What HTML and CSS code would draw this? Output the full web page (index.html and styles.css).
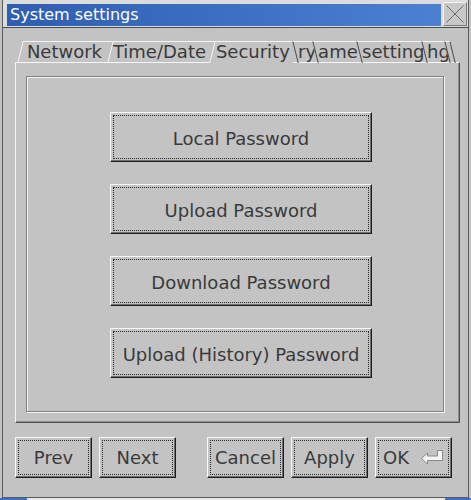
FILE: index.html
```html
<!DOCTYPE html>
<html>
<head>
<meta charset="utf-8">
<link rel="stylesheet" href="styles.css">
</head>
<body>
<div class="window">
  <div class="titlebar">
    <div class="title">System settings</div>
    <div class="close">
      <svg width="22" height="22" viewBox="0 0 22 22"><path d="M2.5 2.5 L19.5 19.5 M19.5 2.5 L2.5 19.5" stroke="#6a6a6a" stroke-width="1" fill="none"/></svg>
    </div>
  </div>
  <div class="content">
    <div class="tabs">
      <div class="tab tab-l w-net"><span>Network</span></div>
      <div class="tab tab-l w-time"><span>Time/Date</span></div>
      <div class="tab tab-l active w-sec"><span>Security</span></div>
      <div class="tab tab-r w-ry"><span>ry</span></div>
      <div class="tab tab-r w-ame"><span>ame</span></div>
      <div class="tab tab-r w-set"><span>setting</span></div>
      <div class="tab tab-r w-hg"><span>hg</span></div>
      <div class="tab tab-r tab-end"></div>
    </div>
    <div class="pane">
      <div class="group">
        <div class="btn big"><div class="focus">Local Password</div></div>
        <div class="btn big"><div class="focus">Upload Password</div></div>
        <div class="btn big"><div class="focus">Download Password</div></div>
        <div class="btn big"><div class="focus">Upload (History) Password</div></div>
      </div>
    </div>
    <div class="actions">
      <div class="btn small"><div class="focus">Prev</div></div>
      <div class="btn small"><div class="focus">Next</div></div>
      <div class="btn small push"><div class="focus">Cancel</div></div>
      <div class="btn small"><div class="focus">Apply</div></div>
      <div class="btn small"><div class="focus ok">OK
        <svg class="enter" width="23" height="15" viewBox="0 0 23 15"><path d="M0.5 8.5 L6.5 3 L6.5 6 L16.5 6 L16.5 0.5 L21.5 0.5 L21.5 10.5 L6.5 10.5 L6.5 14 Z" fill="#f4f4f4" stroke="#8a8a8a" stroke-width="1" stroke-linejoin="miter"/></svg>
      </div></div>
    </div>
  </div>
</div>
<div class="taskbar"><span class="tb tb-left"></span><span class="tb tb-right"></span></div>
</body>
</html>
```

FILE: styles.css
```css
html, body {
  margin: 0;
  padding: 0;
}
body {
  width: 471px;
  height: 500px;
  overflow: hidden;
  background: #c3c3c3;
  font-family: "DejaVu Sans", Verdana, sans-serif;
  color: #3a3a3a;
}
.window {
  margin: 0 2px;
  height: 498px;
  box-sizing: border-box;
  border: 1px solid #5c5c5c;
  border-top: none;
  display: flex;
  flex-direction: column;
}
.titlebar {
  height: 28px;
  box-sizing: border-box;
  border-bottom: 1px solid #4a4a4a;
  background: #dcdcdc;
  display: flex;
  align-items: flex-start;
  padding-left: 4px;
}
.title {
  margin-top: 4px;
  width: 431px;
  height: 22px;
  padding-left: 3px;
  background: linear-gradient(to right, #2d5eb2, #4c80d0);
  color: #fff;
  font-size: 16px;
  line-height: 22px;
  white-space: nowrap;
}
.close {
  margin-left: 2px;
  margin-top: 2px;
  width: 24px;
  height: 24px;
  box-sizing: border-box;
  border: 1px solid;
  border-color: #f0f0f0 #7a7a7a #7a7a7a #f0f0f0;
  background: #c8c8c8;
  display: flex;
  align-items: center;
  justify-content: center;
}
.close svg { display: block; }
.content {
  flex: 1;
  padding: 13px 8px 0 12px;
  display: flex;
  flex-direction: column;
}
.tabs {
  display: flex;
  height: 22px;
  margin-bottom: -1px;
  padding-left: 4.5px;
}
.tab {
  height: 22px;
  box-sizing: border-box;
  border-top: 1px solid #f4f4f4;
  overflow: hidden;
  display: flex;
  font-size: 18px;
  color: #3a3a3a;
}
.tab span {
  display: block;
  line-height: 18px;
  padding-top: 1px;
  white-space: nowrap;
}
.tab-l {
  transform: skewX(-14deg);
  border-left: 1px solid #f4f4f4;
  justify-content: center;
  padding-right: 3px;
}
.tab-l span { transform: skewX(14deg); }
.tab-r {
  transform: skewX(14deg);
  border-left: 1px solid #4a4a4a;
  padding-left: 2px;
}
.tab-r span { transform: skewX(-14deg); }
.active { background: #c3c3c3; }
.w-net { width: 90.5px; }
.w-time { width: 101.5px; }
.w-sec { width: 83.5px; }
.w-ry { width: 20px; }
.w-ame { width: 44px; }
.w-set { width: 64.5px; }
.w-hg { width: 23px; }
.tab-end {
  width: 6px;
  padding: 0;
  border-right: 1px solid #4a4a4a;
}
.pane {
  height: 361px;
  box-sizing: border-box;
  border: 1px solid;
  border-color: #f6f6f6 #4e4e4e #4e4e4e #f6f6f6;
  box-shadow: inset -1px -1px #8e8e8e;
  padding: 13px 15px 10px 10px;
  display: flex;
}
.group {
  flex: 1;
  border: 1px solid #808080;
  box-shadow: inset 1px 1px #f6f6f6, 1px 1px 0 #f6f6f6;
  padding: 35px 0 0 83px;
  display: flex;
  flex-direction: column;
  gap: 22px;
}
.btn {
  box-sizing: border-box;
  border: 1px solid;
  border-color: #f8f8f8 #1e1e1e #1e1e1e #f8f8f8;
  box-shadow: inset -1px -1px #6e6e6e;
  padding: 2px;
  display: flex;
  background: #c3c3c3;
}
.focus {
  flex: 1;
  border: 1px dotted #2a2a2a;
  display: flex;
  align-items: center;
  justify-content: center;
  font-size: 18px;
  color: #3a3a3a;
  white-space: nowrap;
}
.big {
  width: 262px;
  height: 50px;
}
.big .focus { padding-top: 3px; }
.actions {
  margin-top: 14px;
  display: flex;
  gap: 7px;
}
.small {
  width: 77px;
  height: 41px;
}
.push { margin-left: 24px; }
.ok { gap: 12px; }
.enter { display: block; }
.taskbar {
  height: 2px;
  display: flex;
  justify-content: space-between;
  background: #e8e8e8;
}
.tb { display: block; height: 2px; background: #3f6fc0; }
.tb-left { width: 27px; }
.tb-right { width: 26px; }
```
